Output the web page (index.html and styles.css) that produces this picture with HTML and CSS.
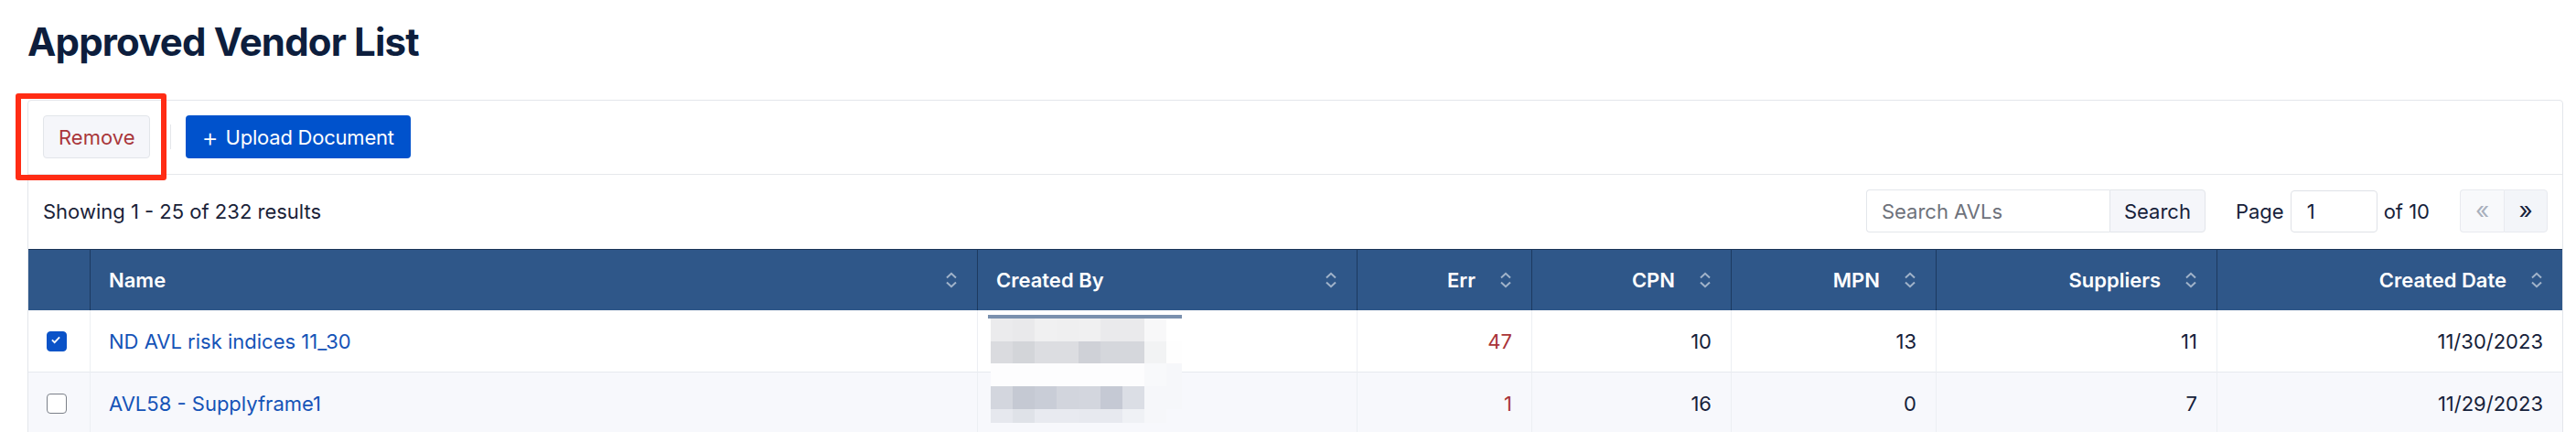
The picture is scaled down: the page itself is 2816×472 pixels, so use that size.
FILE: index.html
```html
<!doctype html>
<html lang="en">
  <head>
    <meta charset="UTF-8" />
    <meta name="viewport" content="width=device-width, initial-scale=1.0" />
    <title>Approved Vendor List</title>
    <link rel="stylesheet" href="styles.css">
  </head>
  <body>
    <div class="page">
      <h1 class="page-title">Approved Vendor List</h1>

      <div class="card">
        <div class="toolbar">
          <button class="btn btn-light btn-remove">Remove</button>
          <span class="toolbar-divider"></span>
          <button class="btn btn-primary"><span class="plus">+</span>Upload Document</button>
        </div>

        <div class="list-bar">
          <span class="result-count">Showing 1 - 25 of 232 results</span>
          <div class="list-controls">
            <div class="search-group">
              <input class="search-input" type="text" placeholder="Search AVLs" />
              <button class="btn btn-light search-btn">Search</button>
            </div>
            <div class="pager">
              <span>Page</span>
              <input class="page-input" type="text" value="1" />
              <span>of 10</span>
            </div>
            <div class="pager-nav">
              <button class="nav-btn" disabled>&laquo;</button>
              <button class="nav-btn">&raquo;</button>
            </div>
          </div>
        </div>

        <table class="avl-table">
          <colgroup>
            <col class="col-check" />
            <col class="col-name" />
            <col class="col-creator" />
            <col class="col-err" />
            <col class="col-cpn" />
            <col class="col-mpn" />
            <col class="col-suppliers" />
            <col class="col-date" />
          </colgroup>
          <thead>
            <tr>
              <th></th>
              <th>
                <div class="th-inner">
                  <span>Name</span>
                  <svg class="sort" viewBox="0 0 14 18"><path d="M2 6.5 7 1.8l5 4.7M2 11.5l5 4.7 5-4.7" /></svg>
                </div>
              </th>
              <th>
                <div class="th-inner">
                  <span>Created By</span>
                  <svg class="sort" viewBox="0 0 14 18"><path d="M2 6.5 7 1.8l5 4.7M2 11.5l5 4.7 5-4.7" /></svg>
                </div>
              </th>
              <th class="num">
                <div class="th-inner">
                  <span>Err</span>
                  <svg class="sort" viewBox="0 0 14 18"><path d="M2 6.5 7 1.8l5 4.7M2 11.5l5 4.7 5-4.7" /></svg>
                </div>
              </th>
              <th class="num">
                <div class="th-inner">
                  <span>CPN</span>
                  <svg class="sort" viewBox="0 0 14 18"><path d="M2 6.5 7 1.8l5 4.7M2 11.5l5 4.7 5-4.7" /></svg>
                </div>
              </th>
              <th class="num">
                <div class="th-inner">
                  <span>MPN</span>
                  <svg class="sort" viewBox="0 0 14 18"><path d="M2 6.5 7 1.8l5 4.7M2 11.5l5 4.7 5-4.7" /></svg>
                </div>
              </th>
              <th class="num">
                <div class="th-inner">
                  <span>Suppliers</span>
                  <svg class="sort" viewBox="0 0 14 18"><path d="M2 6.5 7 1.8l5 4.7M2 11.5l5 4.7 5-4.7" /></svg>
                </div>
              </th>
              <th class="num">
                <div class="th-inner">
                  <span>Created Date</span>
                  <svg class="sort" viewBox="0 0 14 18"><path d="M2 6.5 7 1.8l5 4.7M2 11.5l5 4.7 5-4.7" /></svg>
                </div>
              </th>
            </tr>
          </thead>
          <tbody>
            <tr>
              <td class="check-cell">
                <span class="checkbox checked">
                  <svg viewBox="0 0 22 22"><path d="M6.5 11.5l3 3 6-6.5" /></svg>
                </span>
              </td>
              <td><a class="avl-link" href="#">ND AVL risk indices 11_30</a></td>
              <td class="creator-cell">
                <!-- redacted avatar / name -->
                <div class="redact">
                  <div class="redact-bar"></div>
                  <div class="redact-row r1"></div>
                  <div class="redact-row r2"></div>
                  <div class="redact-row r3"></div>
                  <div class="redact-row r4"></div>
                  <div class="redact-row r5"></div>
                </div>
              </td>
              <td class="num err">47</td>
              <td class="num">10</td>
              <td class="num">13</td>
              <td class="num">11</td>
              <td class="num">11/30/2023</td>
            </tr>
            <tr>
              <td class="check-cell"><span class="checkbox"></span></td>
              <td><a class="avl-link" href="#">AVL58 - Supplyframe1</a></td>
              <td class="creator-cell"></td>
              <td class="num err">1</td>
              <td class="num">16</td>
              <td class="num">0</td>
              <td class="num">7</td>
              <td class="num">11/29/2023</td>
            </tr>
          </tbody>
        </table>
      </div>

      <div class="annotation"></div>
    </div>
  </body>
</html>
```

FILE: styles.css
```css
* {
  box-sizing: border-box;
}

body {
  margin: 0;
  background: #fff;
  font-family: Inter, "Noto Sans", sans-serif;
  font-size: 22px;
  color: #16213a;
}

.page {
  position: relative;
  padding: 0 14px 0 30px;
}

.page-title {
  margin: 0;
  padding-top: 20px;
  font-size: 42px;
  line-height: 52px;
  font-weight: 700;
  letter-spacing: -0.02em;
  color: #0d1e3d;
}

.card {
  margin-top: 37px;
  border: 1px solid #e3e6eb;
  border-radius: 4px;
}

/* top action bar */
.toolbar {
  display: flex;
  align-items: center;
  padding: 16px 16px 17px;
  border-bottom: 1px solid #e6e8ec;
}

.btn {
  height: 47px;
  font-family: inherit;
  font-size: 22px;
  border-radius: 4px;
  cursor: pointer;
}

.btn-light {
  background: #f5f6fa;
  border: 1px solid #e2e5ea;
  color: #16213a;
}

.btn-remove {
  padding: 0 16px;
  color: #a9363a;
}

.toolbar-divider {
  width: 1px;
  height: 27px;
  margin: 0 16px 0 22px;
  background: #e4e6ea;
}

.btn-primary {
  display: flex;
  align-items: center;
  padding: 0 18px 0 17px;
  background: #0052cc;
  border: 0;
  color: #fff;
  letter-spacing: -0.01em;
}

.plus {
  font-size: 28px;
  font-weight: 300;
  margin-right: 8px;
  line-height: 1;
}

/* results + search bar */
.list-bar {
  display: flex;
  align-items: center;
  justify-content: space-between;
  padding: 16px 16px 18px;
}

.result-count {
  color: #1a2238;
}

.list-controls {
  display: flex;
  align-items: center;
}

.search-group {
  display: flex;
}

.search-input {
  width: 266px;
  height: 47px;
  padding: 0 16px;
  border: 1px solid #e3e6eb;
  border-right: 0;
  border-radius: 4px 0 0 4px;
  font-family: inherit;
  font-size: 22px;
  color: #16213a;
  outline: none;
}

.search-input::placeholder {
  color: #6e727b;
}

.search-btn {
  width: 105px;
  padding: 0;
  border-radius: 0 4px 4px 0;
}

.pager {
  display: flex;
  align-items: center;
  gap: 7px;
  margin-left: 33px;
}

.page-input {
  width: 95px;
  height: 46px;
  padding: 0 17px;
  border: 1px solid #dfe2e7;
  border-radius: 4px;
  font-family: inherit;
  font-size: 22px;
  color: #16213a;
  outline: none;
}

.pager-nav {
  display: flex;
  margin-left: 33px;
}

.nav-btn {
  width: 48px;
  height: 47px;
  padding: 0 0 3px;
  background: #f3f5f9;
  border: 1px solid #e8eaef;
  font-family: inherit;
  font-size: 26px;
  color: #16213a;
}

.nav-btn:first-child {
  border-radius: 4px 0 0 4px;
  border-right: 0;
  background: #f8f9fb;
}

.nav-btn:last-child {
  border-radius: 0 4px 4px 0;
}

.nav-btn:disabled {
  color: #a9b0bd;
}

/* table */
.avl-table {
  width: 100%;
  table-layout: fixed;
  border-collapse: separate;
  border-spacing: 0;
}

.col-check { width: 67px; }
.col-name { width: 970px; }
.col-creator { width: 415px; }
.col-err { width: 191px; }
.col-cpn { width: 218px; }
.col-mpn { width: 224px; }
.col-suppliers { width: 307px; }
.col-date { width: 378px; }

.avl-table th {
  height: 67px;
  padding: 0 21px 0 20px;
  background: #2f5789;
  border-top: 1px solid #1b3557;
  border-left: 1px solid #1d3a60;
  color: #fff;
  font-weight: 600;
  text-align: left;
}

.avl-table th:first-child {
  border-left: 0;
}

.th-inner {
  display: flex;
  align-items: center;
  justify-content: space-between;
}

.num .th-inner {
  justify-content: flex-end;
  gap: 26px;
}

.sort {
  width: 14px;
  height: 18px;
  fill: none;
  stroke: rgba(255, 255, 255, 0.55);
  stroke-width: 2;
}

.avl-table td {
  height: 68px;
  padding: 0 21px 0 20px;
  border-bottom: 1px solid #e6e9ee;
  border-left: 1px solid #eceff3;
  white-space: nowrap;
}

.avl-table td:first-child {
  border-left: 0;
}

.avl-table tbody tr:nth-child(even) td {
  background: #f7f8fc;
}

.avl-table td.num {
  text-align: right;
}

.avl-table td.err {
  color: #a93437;
}

.avl-link {
  color: #1553b7;
  text-decoration: none;
}

.check-cell {
  line-height: 0;
}

.checkbox {
  display: inline-block;
  width: 22px;
  height: 22px;
  border: 1.5px solid #7b8089;
  border-radius: 4px;
  background: #fff;
}

.checkbox.checked {
  border-color: #0b53c8;
  background: #0b53c8;
}

.checkbox svg {
  width: 100%;
  height: 100%;
  margin: -1.5px;
  fill: none;
  stroke: #fff;
  stroke-width: 2;
}

/* pixelated redaction over the creator column */
.creator-cell {
  position: relative;
}

.redact {
  position: absolute;
  top: 5px;
  left: 11px;
  width: 212px;
  z-index: 1;
}

.redact-bar {
  height: 4px;
  background: #7a90ae;
}

.redact-row {
  height: 25px;
  margin-left: 3px;
}

.redact-row.r1 {
  background: linear-gradient(to right, #ebebed 0 24px, #e9e9eb 24px 48px, #f0f0f1 48px 72px, #efeff0 72px 96px,
    #f0f0f1 96px 120px, #eaeaec 120px 168px, #f8f8f9 168px 192px, #fff 192px);
}

.redact-row.r2 {
  height: 24px;
  background: linear-gradient(to right, #dadbdf 0 24px, #d3d5d9 24px 48px, #dcdde1 48px 96px, #cfd1d7 96px 120px,
    #d5d7dc 120px 168px, #f2f3f4 168px 192px, #fefefe 192px);
}

.redact-row.r3 {
  background: linear-gradient(to right, #fdfdfe 0 168px, #f8f9fb 168px 192px, #f6f7fa 192px);
}

.redact-row.r4 {
  background: linear-gradient(to right, #d3d6de 0 24px, #c5c9d3 24px 48px, #c9cdd7 48px 72px, #d2d5dd 72px 96px,
    #d3d6de 96px 120px, #c5c9d4 120px 144px, #dbdee5 144px 168px, #f6f7fa 168px);
}

.redact-row.r5 {
  height: 15px;
  width: 192px;
  background: linear-gradient(to right, #e6e8ee 0 24px, #dfe2e8 24px 48px, #e8eaf0 48px 96px, #e7e9ef 96px 144px,
    #eff1f5 144px 168px, #f6f7fa 168px);
}

/* red highlight drawn over the Remove button */
.annotation {
  position: absolute;
  left: 17px;
  top: 102px;
  width: 165px;
  height: 95px;
  border: 6px solid #ff2c14;
  border-radius: 3px;
  pointer-events: none;
}
```
